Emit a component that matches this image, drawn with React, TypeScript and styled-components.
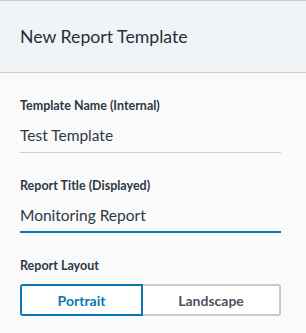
import React, { useState } from 'react';
import styled, { createGlobalStyle } from 'styled-components';

const GlobalStyle = createGlobalStyle`
  html, body {
    margin: 0;
    padding: 0;
    background: #fafafa;
  }
  body {
    font-family: Lato, "Open Sans", sans-serif;
    color: #2c3945;
  }
`;

const Panel = styled.div`
  width: 306px;
  height: 333px;
  border-top: 1px solid #c9ced3;
  box-sizing: border-box;
  background: #fafafa;
  overflow: hidden;
`;

const Header = styled.div`
  height: 72px;
  background: #f1f4f6;
  border-bottom: 1px solid #c6cbd0;
  display: flex;
  align-items: center;
  padding: 0 20px;
  box-sizing: border-box;
`;

const Title = styled.h2`
  margin: 0;
  font-size: 17.7px;
  font-weight: 400;
  color: #23303b;
`;

const Body = styled.div`
  padding: 25px 25px 0 20px;
  display: flex;
  flex-direction: column;
`;

const Field = styled.div`
  display: flex;
  flex-direction: column;
  margin-bottom: 25px;
`;

const Label = styled.label`
  font-size: 12.5px;
  font-weight: 700;
  color: #2c3945;
  line-height: 16px;
  margin-bottom: 9px;
`;

const Input = styled.input<{ focused?: boolean }>`
  font-family: inherit;
  font-size: 15.5px;
  color: #2c3945;
  background: transparent;
  border: none;
  border-bottom: ${({ focused }) => (focused ? '2px solid #0a77b3' : '1px solid #c9ccd0')};
  padding: 2px 0 ${({ focused }) => (focused ? '6px' : '7px')} 0;
  height: 30px;
  box-sizing: border-box;
  outline: none;
  width: 100%;
  caret-color: #111;
`;

const Toggle = styled.div`
  display: flex;
  height: 32px;
  margin-top: 1px;
`;

const ToggleButton = styled.button<{ active: boolean }>`
  flex: 1;
  font-family: inherit;
  font-size: 14px;
  font-weight: 700;
  background: #ffffff;
  color: ${({ active }) => (active ? '#0a77b3' : '#4a5560')};
  border: 2px solid ${({ active }) => (active ? '#0a77b3' : '#c6cbd0')};
  cursor: pointer;
  padding: 0;
  &:first-child {
    flex: 0 0 123px;
    border-radius: 3px 0 0 3px;
  }
  &:last-child {
    border-radius: 0 3px 3px 0;
    border-left: none;
  }
`;

export default function App() {
  const [name, setName] = useState('Test Template');
  const [title, setTitle] = useState('Monitoring Report');
  const [layout, setLayout] = useState<'portrait' | 'landscape'>('portrait');

  return (
    <>
      <GlobalStyle />
      <Panel>
        <Header>
          <Title>New Report Template</Title>
        </Header>
        <Body>
          <Field>
            <Label>Template Name (Internal)</Label>
            <Input value={name} onChange={(e) => setName(e.target.value)} />
          </Field>
          <Field>
            <Label>Report Title (Displayed)</Label>
            <Input focused autoFocus value={title} onChange={(e) => setTitle(e.target.value)} />
          </Field>
          <Label>Report Layout</Label>
          <Toggle>
            <ToggleButton active={layout === 'portrait'} onClick={() => setLayout('portrait')}>
              Portrait
            </ToggleButton>
            <ToggleButton active={layout === 'landscape'} onClick={() => setLayout('landscape')}>
              Landscape
            </ToggleButton>
          </Toggle>
        </Body>
      </Panel>
    </>
  );
}
